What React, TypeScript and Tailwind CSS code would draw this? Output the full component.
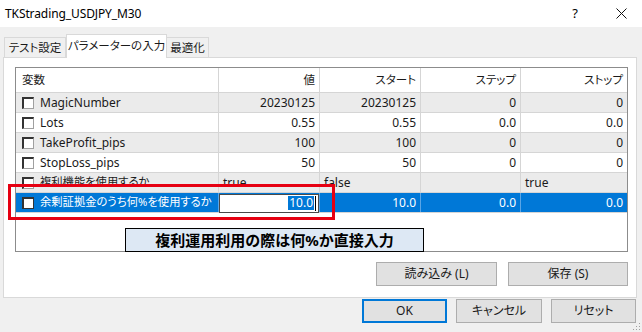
import React from "react";

const F = '"Noto Sans","Noto Sans CJK JP",sans-serif';

type Row = {
  name: string;
  v: string;
  s: string;
  st: string;
  sp: string;
  left?: boolean;
  jp?: boolean;
  bg: string;
  sel?: boolean;
};

const rows: Row[] = [
  { name: "MagicNumber", v: "20230125", s: "20230125", st: "0", sp: "0", bg: "bg-[#ebebeb]" },
  { name: "Lots", v: "0.55", s: "0.55", st: "0.0", sp: "0.0", bg: "bg-white" },
  { name: "TakeProfit_pips", v: "100", s: "100", st: "0", sp: "0", bg: "bg-[#ebebeb]" },
  { name: "StopLoss_pips", v: "50", s: "50", st: "0", sp: "0", bg: "bg-white" },
  { name: "複利機能を使用するか", v: "true", s: "false", st: "", sp: "true", left: true, jp: true, bg: "bg-[#ebebeb]" },
  { name: "余剰証拠金のうち何%を使用するか", v: "10.0", s: "10.0", st: "0.0", sp: "0.0", jp: true, bg: "bg-[#0078d7]", sel: true },
];

function Check({ sel }: { sel?: boolean }) {
  return (
    <div
      className={
        "w-[12px] h-[12px] bg-white border-t-2 border-l-2 border-b border-r shrink-0 " +
        (sel ? "border-[#333333]" : "border-t-[#333333] border-l-[#333333] border-b-[#a0a0a0] border-r-[#a0a0a0]")
      }
    />
  );
}

function Btn({ children, w, primary }: { children: React.ReactNode; w: string; primary?: boolean }) {
  return (
    <div
      className={
        "h-[24px] flex items-center justify-center bg-[#e1e1e1] text-[12px] text-[#1a1a1a] whitespace-nowrap [font-feature-settings:'palt'] " +
        w +
        (primary ? " border-2 border-[#0078d7]" : " border border-[#adadad]")
      }
    >
      {children}
    </div>
  );
}

export default function App() {
  const sep = "border-r border-[#d5d5d5]";
  return (
    <div className="relative w-[642px] h-[332px] bg-[#f0f0f0] overflow-hidden text-[#1a1a1a]" style={{ fontFamily: F }}>
      {/* title bar */}
      <div className="h-[27px] bg-white flex items-center pl-[5px] text-[12px] text-black">
        <span className="tracking-[-0.1px]">TKStrading_USDJPY_M30</span>
        <span className="ml-auto mr-[38px] text-[13px]">?</span>
        <svg width="11" height="11" viewBox="0 0 11 11" className="mr-[15px]">
          <path d="M0.5 0.5 L10.5 10.5 M10.5 0.5 L0.5 10.5" stroke="#111" strokeWidth="1" />
        </svg>
      </div>

      {/* tabs */}
      <div className="h-[30px] flex items-end pl-[4px] whitespace-nowrap [font-feature-settings:'palt'] text-[11.5px]">
        <div className="w-[62px] h-[20px] border border-b-0 border-[#d9d9d9] bg-[#f0f0f0] flex items-center justify-center">
          テスト設定
        </div>
        <div className="relative z-10 -mb-px w-[101px] h-[24px] border border-b-0 border-[#d9d9d9] bg-white flex items-center justify-center pb-[2px]">
          パラメーターの入力
        </div>
        <div className="w-[42px] h-[20px] border border-b-0 border-l-0 border-[#d9d9d9] bg-[#f0f0f0] flex items-center justify-center">
          最適化
        </div>
      </div>

      {/* panel */}
      <div className="ml-[3px] w-[634px] h-[241px] border border-[#d9d9d9] bg-white pl-[11px] pt-[9px]">
        <div className="w-[613px] h-[185px] border border-[#8c8c8c] bg-white text-[12px]">
          {/* header */}
          <div className="flex h-[25px] border-b border-[#d5d5d5] text-[11.5px] [font-feature-settings:'palt']">
            <div className={"w-[203px] pl-[6px] flex items-center " + sep}>変数</div>
            <div className={"w-[101px] pr-[4px] flex items-center justify-end " + sep}>値</div>
            <div className={"w-[101px] pr-[4px] flex items-center justify-end " + sep}>スタート</div>
            <div className={"w-[100px] pr-[4px] flex items-center justify-end " + sep}>ステップ</div>
            <div className="flex-1 pr-[4px] flex items-center justify-end">ストップ</div>
          </div>
          {rows.map((r, i) => {
            const c = r.sel ? "border-r border-[#5aa5e6]" : sep;
            const txt = r.sel ? "text-white" : "";
            const al = r.left ? "justify-start pl-[4px]" : "justify-end pr-[4px]";
            return (
              <div key={i} className={"flex h-[20px] border-b border-[#d5d5d5] " + r.bg + " " + txt}>
                <div className={"w-[203px] pl-[6px] flex items-center gap-[6px] overflow-hidden [font-feature-settings:'palt'] " + c}>
                  <Check sel={r.sel} />
                  <span className={"whitespace-nowrap " + (r.jp ? "text-[11.3px]" : "")}>{r.name}</span>
                </div>
                {r.sel ? (
                  <div className={"w-[101px] flex items-center " + c}>
                    <div className="w-[100px] h-[19px] mt-[1px] bg-white border border-[#4a4a4a] flex items-center justify-end pr-[2px]">
                      <span className="bg-[#0078d7] text-white leading-[14px] px-[1px]">10.0</span>
                      <span className="w-px h-[15px] bg-black ml-px" />
                    </div>
                  </div>
                ) : (
                  <div className={"w-[101px] flex items-center " + al + " " + c}>{r.v}</div>
                )}
                <div className={"w-[101px] flex items-center " + al + " " + c}>{r.s}</div>
                <div className={"w-[100px] flex items-center " + al + " " + c}>{r.st}</div>
                <div className={"flex-1 flex items-center " + al}>{r.sp}</div>
              </div>
            );
          })}
        </div>
        <div className="flex justify-end gap-[11px] mt-[10px] w-[613px]">
          <Btn w="w-[121px]">読み込み (L)</Btn>
          <Btn w="w-[120px]">保存 (S)</Btn>
        </div>
      </div>

      {/* bottom buttons */}
      <div className="flex mt-[1px] pl-[362px] gap-[9px]">
        <Btn w="w-[85px]" primary>
          OK
        </Btn>
        <Btn w="w-[86px]">キャンセル</Btn>
        <Btn w="w-[85px]">リセット</Btn>
      </div>

      {/* resize grip */}
      <svg width="10" height="10" viewBox="0 0 10 10" className="absolute right-[1px] bottom-[1px]">
        {[
          [8, 2],
          [8, 5],
          [5, 5],
          [8, 8],
          [5, 8],
          [2, 8],
        ].map(([x, y], i) => (
          <rect key={i} x={x} y={y} width="1" height="1" fill="#a0a0a0" />
        ))}
      </svg>

      {/* annotation overlays */}
      <div className="absolute left-[8px] top-[184px] w-[327px] h-[36px] border-[3px] border-[#e60012]" />
      <div className="absolute left-[125px] top-[228px] w-[299px] h-[24px] bg-[#dde8f4] border border-black flex items-center justify-center text-[15px] font-bold text-black">
        複利運用利用の際は何%か直接入力
      </div>
    </div>
  );
}
